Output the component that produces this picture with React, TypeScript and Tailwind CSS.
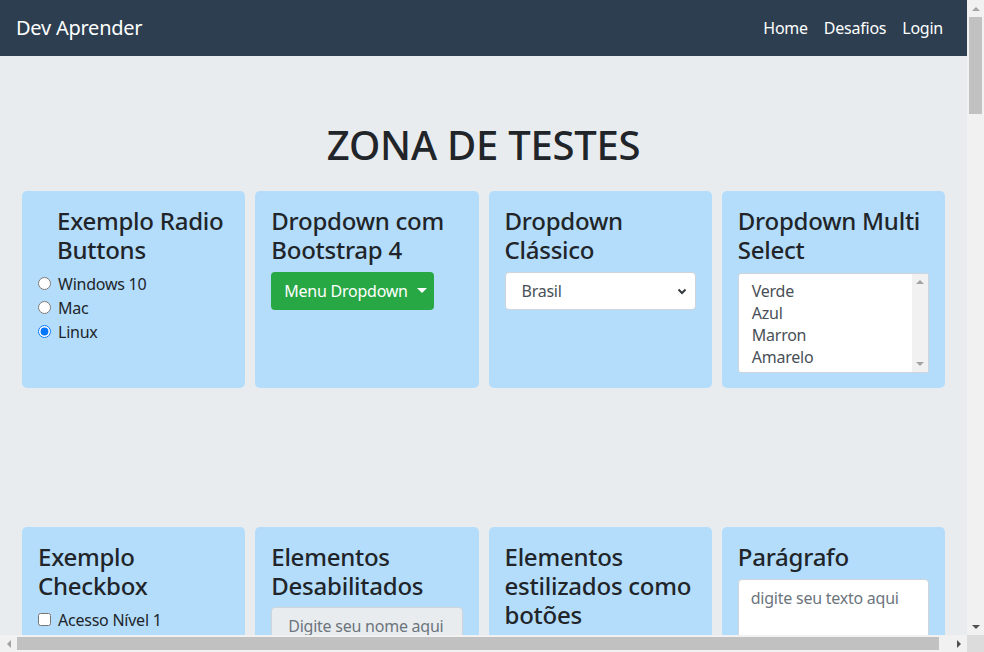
import React from 'react';

const cardClass = 'h-[197px] rounded-[5px] bg-[#b4ddfc] p-4 text-[#212529]';
const headingClass = 'text-2xl leading-[28.8px] font-medium mb-2';

function Caret() {
  return <span className="ml-[9px] h-0 w-0 border-x-[5px] border-t-[5px] border-x-transparent border-t-white" />;
}

function VScrollbar() {
  return (
    <div className="flex flex-col bg-[#f1f1f1]">
      <div className="flex h-[17px] items-center justify-center">
        <span className="h-0 w-0 border-x-[4px] border-b-[4px] border-x-transparent border-b-[#a3a3a3]" />
      </div>
      <div className="mx-[2px] h-[97px] bg-[#c1c1c1]" />
      <div className="flex-1" />
      <div className="flex h-[17px] items-center justify-center">
        <span className="h-0 w-0 border-x-[4px] border-t-[4px] border-x-transparent border-t-[#505050]" />
      </div>
    </div>
  );
}

function HScrollbar() {
  return (
    <div className="flex bg-[#f1f1f1]">
      <div className="flex w-[17px] items-center justify-center">
        <span className="h-0 w-0 border-y-[4px] border-r-[4px] border-y-transparent border-r-[#a3a3a3]" />
      </div>
      <div className="my-[2px] w-[922px] bg-[#c1c1c1]" />
      <div className="flex-1" />
      <div className="flex w-[17px] items-center justify-center">
        <span className="h-0 w-0 border-y-[4px] border-l-[4px] border-y-transparent border-l-[#505050]" />
      </div>
    </div>
  );
}

function MultiSelect() {
  const options = ['Verde', 'Azul', 'Marron', 'Amarelo'];
  return (
    <div className="flex h-[100px] overflow-hidden rounded-[3px] border border-[#ced4da] bg-white">
      <ul className="flex-1 pl-[13px] pt-[6px] text-base leading-[22px] text-[#495057]">
        {options.map((o) => (
          <li key={o}>{o}</li>
        ))}
      </ul>
      <div className="flex w-[16px] flex-col items-center justify-between bg-[#f1f1f1] py-[6px]">
        <span className="h-0 w-0 border-x-[4px] border-b-[4px] border-x-transparent border-b-[#a3a3a3]" />
        <span className="h-0 w-0 border-x-[4px] border-t-[4px] border-x-transparent border-t-[#a3a3a3]" />
      </div>
    </div>
  );
}

export default function App() {
  return (
    <div className="grid h-[652px] w-[984px] grid-cols-[967px_17px] grid-rows-[635px_17px] overflow-hidden font-['Noto_Sans','Open_Sans',sans-serif] tracking-[-0.015em]">
      <div className="overflow-hidden bg-[#e9ecef]">
        <nav className="flex h-14 items-center justify-between bg-[#2c3e50] px-4 text-white">
          <span className="text-xl">Dev Aprender</span>
          <div className="flex text-base">
            <a className="px-2">Home</a>
            <a className="px-2">Desafios</a>
            <a className="px-2">Login</a>
          </div>
        </nav>

        <h1 className="pt-[65px] text-center text-[40px] leading-[48px] font-medium text-[#212529]">ZONA DE TESTES</h1>

        <div className="mt-[22px] grid grid-cols-4 gap-[10px] px-[22px]">
          <div className={cardClass}>
            <h4 className={headingClass + ' pl-[19px]'}>
              Exemplo Radio
              <br />
              Buttons
            </h4>
            {['Windows 10', 'Mac', 'Linux'].map((os) => (
              <label key={os} className="-mt-px mb-px flex items-center gap-[7px] text-base leading-6">
                <input type="radio" name="os" defaultChecked={os === 'Linux'} className="h-[13px] w-[13px]" />
                {os}
              </label>
            ))}
          </div>

          <div className={cardClass}>
            <h4 className={headingClass}>
              Dropdown com
              <br />
              Bootstrap 4
            </h4>
            <button className="-mt-px flex h-[38px] w-[163px] items-center whitespace-nowrap rounded-[4px] bg-[#28a745] px-[13px] text-base text-white">
              Menu Dropdown
              <Caret />
            </button>
          </div>

          <div className={cardClass}>
            <h4 className={headingClass}>
              Dropdown
              <br />
              Clássico
            </h4>
            <div className="-mt-px flex h-[38px] items-center justify-between rounded-[4px] border border-[#ced4da] bg-white pl-4 pr-[8px] text-base text-[#495057]">
              <span>Brasil</span>
              <svg width="10" height="10" viewBox="0 0 10 10" fill="none" stroke="#343a40" strokeWidth="2">
                <path d="M1.5 3.5 5 7l3.5-3.5" />
              </svg>
            </div>
          </div>

          <div className={cardClass}>
            <h4 className={headingClass}>
              Dropdown Multi
              <br />
              Select
            </h4>
            <MultiSelect />
          </div>
        </div>

        <div className="mt-[139px] grid grid-cols-4 gap-[10px] px-[22px]">
          <div className={cardClass}>
            <h4 className={headingClass}>
              Exemplo
              <br />
              Checkbox
            </h4>
            <label className="-mt-px flex items-center gap-[7px] text-base leading-6">
              <input type="checkbox" className="h-[13px] w-[13px]" />
              Acesso Nível 1
            </label>
          </div>

          <div className={cardClass}>
            <h4 className={headingClass}>
              Elementos
              <br />
              Desabilitados
            </h4>
            <div className="-mt-[2px] flex h-[38px] items-center rounded-[4px] border border-[#ced4da] bg-[#e9ecef] pl-4 text-base text-[#6c757d]">
              Digite seu nome aqui
            </div>
          </div>

          <div className={cardClass}>
            <h4 className={headingClass}>
              Elementos
              <br />
              estilizados como
              <br />
              botões
            </h4>
          </div>

          <div className={cardClass}>
            <h4 className={headingClass}>Parágrafo</h4>
            <div className="-mt-px h-[80px] rounded-[4px] border border-[#ced4da] bg-white px-3 pt-[6px] text-base text-[#6c757d]">
              digite seu texto aqui
            </div>
          </div>
        </div>
      </div>
      <VScrollbar />
      <HScrollbar />
      <div className="bg-[#dcdcdc]" />
    </div>
  );
}
